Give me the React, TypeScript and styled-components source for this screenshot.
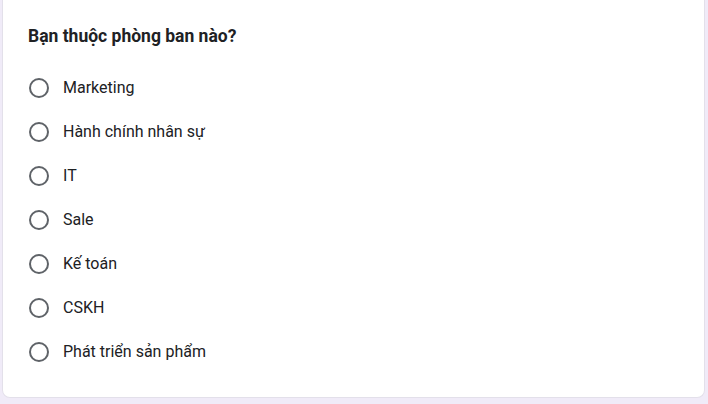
import React from "react";
import styled, { createGlobalStyle } from "styled-components";

const Global = createGlobalStyle`
  html, body { margin: 0; padding: 0; background: #f0ebf8; }
  body { font-family: Roboto, "Noto Sans", Arial, sans-serif; }
`;

const Page = styled.div`
  width: 708px;
  height: 404px;
  padding: 0 3px 0 2px;
  box-sizing: border-box;
`;

const Card = styled.div`
  background: #fff;
  border: 1px solid #e3e0ea;
  border-top: none;
  border-radius: 0 0 8px 8px;
  padding: 23px 26px 24px 25px;
  height: 398px;
  box-sizing: border-box;
`;

const Title = styled.div`
  font-size: 17.5px;
  font-weight: 700;
  color: #202124;
  line-height: 26px;
  margin-bottom: 17px;
`;

const List = styled.div`
  display: flex;
  flex-direction: column;
`;

const Option = styled.label`
  display: flex;
  align-items: center;
  height: 44px;
  gap: 14px;
  cursor: pointer;
`;

const Radio = styled.span`
  width: 20px;
  height: 20px;
  border: 2px solid #5f6368;
  border-radius: 50%;
  box-sizing: border-box;
  margin-left: 1px;
  flex: none;
`;

const Label = styled.span`
  font-size: 16px;
  color: #202124;
  line-height: 20px;
`;

const options = [
  "Marketing",
  "Hành chính nhân sự",
  "IT",
  "Sale",
  "Kế toán",
  "CSKH",
  "Phát triển sản phẩm",
];

export default function App() {
  return (
    <Page>
      <Global />
      <Card>
        <Title>Bạn thuộc phòng ban nào?</Title>
        <List>
          {options.map((o) => (
            <Option key={o}>
              <Radio />
              <Label>{o}</Label>
            </Option>
          ))}
        </List>
      </Card>
    </Page>
  );
}
